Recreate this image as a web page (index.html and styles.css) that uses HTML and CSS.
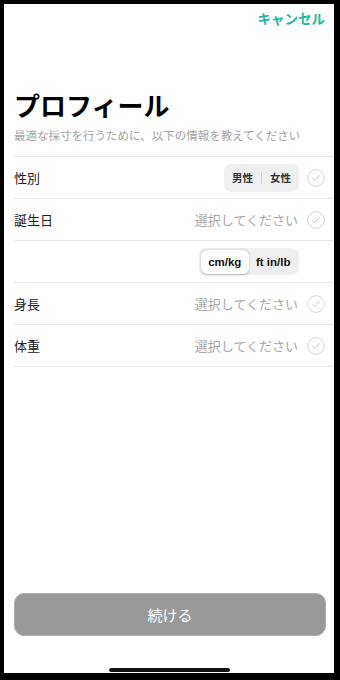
FILE: index.html
```html
<!DOCTYPE html>
<html lang="ja">
<head>
<meta charset="utf-8">
<link rel="stylesheet" href="styles.css">
</head>
<body>
<div class="screen">
  <div class="topbar"><span class="cancel">キャンセル</span></div>
  <h1 class="title">プロフィール</h1>
  <p class="subtitle">最適な採寸を行うために、以下の情報を教えてください</p>
  <div class="list">
    <div class="row">
      <span class="label">性別</span>
      <div class="right">
        <div class="seg">
          <span class="seg-item">男性</span>
          <span class="seg-sep"></span>
          <span class="seg-item">女性</span>
        </div>
        <svg class="check" viewBox="0 0 18 18" width="18" height="18"><circle cx="9" cy="9" r="8.3" fill="none" stroke="#d6d6d6" stroke-width="1"/><path d="M5.6 9.4 L7.8 11.5 L12.3 6.5" fill="none" stroke="#c4c4c4" stroke-width="0.9" stroke-linecap="round" stroke-linejoin="round"/></svg>
      </div>
    </div>
    <div class="row">
      <span class="label">誕生日</span>
      <div class="right">
        <span class="placeholder">選択してください</span>
        <svg class="check" viewBox="0 0 18 18" width="18" height="18"><circle cx="9" cy="9" r="8.3" fill="none" stroke="#d6d6d6" stroke-width="1"/><path d="M5.6 9.4 L7.8 11.5 L12.3 6.5" fill="none" stroke="#c4c4c4" stroke-width="0.9" stroke-linecap="round" stroke-linejoin="round"/></svg>
      </div>
    </div>
    <div class="row">
      <span class="label"></span>
      <div class="right right-nocheck">
        <div class="units">
          <span class="unit unit-on">cm/kg</span>
          <span class="unit">ft in/lb</span>
        </div>
      </div>
    </div>
    <div class="row">
      <span class="label">身長</span>
      <div class="right">
        <span class="placeholder">選択してください</span>
        <svg class="check" viewBox="0 0 18 18" width="18" height="18"><circle cx="9" cy="9" r="8.3" fill="none" stroke="#d6d6d6" stroke-width="1"/><path d="M5.6 9.4 L7.8 11.5 L12.3 6.5" fill="none" stroke="#c4c4c4" stroke-width="0.9" stroke-linecap="round" stroke-linejoin="round"/></svg>
      </div>
    </div>
    <div class="row row-last">
      <span class="label">体重</span>
      <div class="right">
        <span class="placeholder">選択してください</span>
        <svg class="check" viewBox="0 0 18 18" width="18" height="18"><circle cx="9" cy="9" r="8.3" fill="none" stroke="#d6d6d6" stroke-width="1"/><path d="M5.6 9.4 L7.8 11.5 L12.3 6.5" fill="none" stroke="#c4c4c4" stroke-width="0.9" stroke-linecap="round" stroke-linejoin="round"/></svg>
      </div>
    </div>
  </div>
  <button class="continue">続ける</button>
  <div class="home-indicator"></div>
</div>
</body>
</html>
```

FILE: styles.css
```css
html, body {
  margin: 0;
  padding: 0;
  background: #000;
}
body {
  width: 340px;
  height: 680px;
  overflow: hidden;
  font-family: "Noto Sans CJK JP", "Noto Sans", sans-serif;
}
.screen {
  position: relative;
  margin: 4px 0 0 4px;
  width: 330px;
  height: 669px;
  background: #fff;
  display: flex;
  flex-direction: column;
  box-sizing: border-box;
}
.topbar {
  display: flex;
  justify-content: flex-end;
  padding: 4px 9px 0 0;
  height: 28px;
  box-sizing: border-box;
}
.cancel {
  font-size: 13.5px;
  line-height: 20px;
  font-weight: 700;
  color: #1db6a6;
}
.title {
  margin: 56px 0 0 10px;
  font-size: 26px;
  line-height: 34px;
  font-weight: 700;
  color: #000;
}
.subtitle {
  margin: 4px 0 0 10px;
  font-size: 11.5px;
  line-height: 18px;
  color: #a3a3a3;
}
.list {
  margin: 12px 0 0 10px;
}
.row {
  height: 42px;
  box-sizing: border-box;
  border-top: 1px solid #e8e8e8;
  display: flex;
  align-items: center;
  justify-content: space-between;
  padding-right: 9px;
}
.row-last {
  border-bottom: 1px solid #e8e8e8;
  height: 43px;
}
.label {
  font-size: 13px;
  color: #222;
}
.right {
  display: flex;
  align-items: center;
  gap: 8px;
}
.right-nocheck {
  padding-right: 26px;
}
.placeholder {
  font-size: 13px;
  color: #a8a8a8;
  margin-right: 1px;
}
.check {
  display: block;
}
.seg {
  display: flex;
  align-items: center;
  height: 28px;
  width: 75px;
  border-radius: 7px;
  background: #efefef;
}
.seg-item {
  flex: 1;
  text-align: center;
  font-size: 10.5px;
  font-weight: 700;
  color: #333;
}
.seg-sep {
  width: 1px;
  height: 12px;
  background: #cfcfcf;
}
.units {
  display: flex;
  align-items: center;
  width: 100px;
  height: 27px;
  padding: 1.5px;
  box-sizing: border-box;
  border-radius: 7px;
  background: #efefef;
}
.unit {
  flex: 1;
  height: 24px;
  display: flex;
  align-items: center;
  justify-content: center;
  font-family: "Liberation Sans", Arial, sans-serif;
  font-size: 11.5px;
  font-weight: 700;
  color: #111;
  border-radius: 6px;
}
.unit-on {
  background: #fff;
  box-shadow: 0 0.5px 2px rgba(0, 0, 0, 0.25);
}
.continue {
  margin: auto 8px 37px 10px;
  height: 43px;
  border: 1px solid #b0b0b0;
  border-radius: 10px;
  background: #999;
  color: #fff;
  font-family: "Noto Sans CJK JP", "Noto Sans", sans-serif;
  font-size: 15px;
  padding: 0;
}
.home-indicator {
  position: absolute;
  left: 105px;
  bottom: 1px;
  width: 121px;
  height: 4px;
  border-radius: 2px;
  background: #111;
}
```
